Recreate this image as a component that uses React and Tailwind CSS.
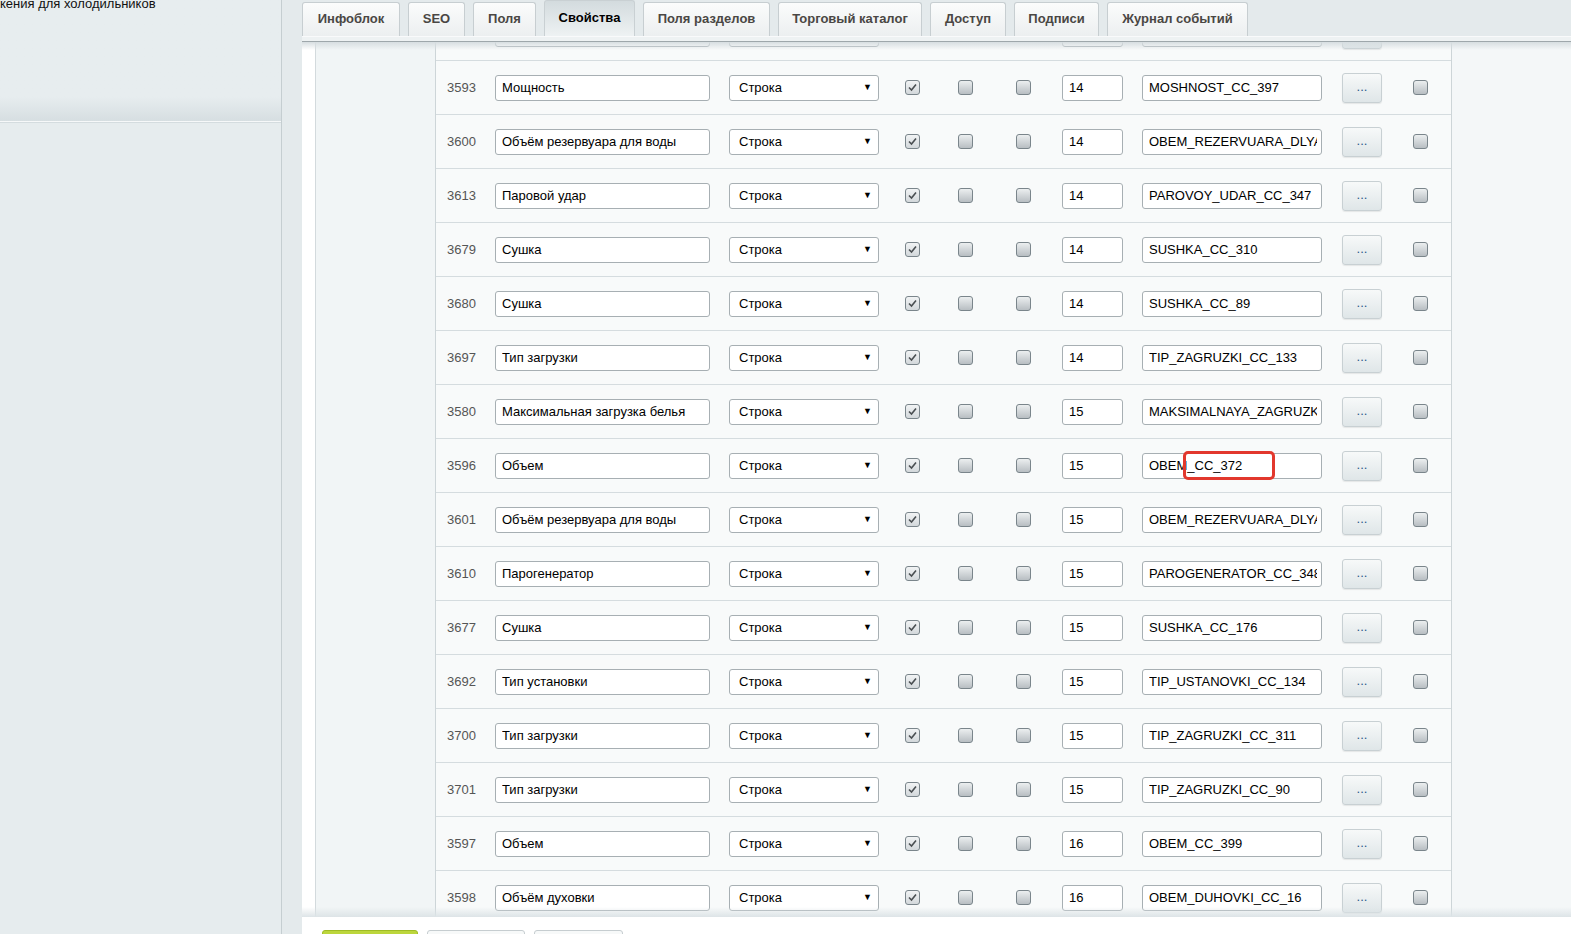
import React from "react";

const tabs = [
  { label: "Инфоблок", w: "w-[98px]" },
  { label: "SEO", w: "w-[57px]" },
  { label: "Поля", w: "w-[63px]" },
  { label: "Свойства", w: "w-[91px]", active: true },
  { label: "Поля разделов", w: "w-[127px]" },
  { label: "Торговый каталог", w: "w-[144px]" },
  { label: "Доступ", w: "w-[76px]" },
  { label: "Подписи", w: "w-[85px]" },
  { label: "Журнал событий", w: "w-[141px]" },
];

const rows = [
  { id: 3591, name: "Мощность двигателя", sort: 14, code: "MOSHNOST_DVIGATELYA_CC_112" },
  { id: 3593, name: "Мощность", sort: 14, code: "MOSHNOST_CC_397" },
  { id: 3600, name: "Объём резервуара для воды", sort: 14, code: "OBEM_REZERVUARA_DLYA_VODY_CC_356" },
  { id: 3613, name: "Паровой удар", sort: 14, code: "PAROVOY_UDAR_CC_347" },
  { id: 3679, name: "Сушка", sort: 14, code: "SUSHKA_CC_310" },
  { id: 3680, name: "Сушка", sort: 14, code: "SUSHKA_CC_89" },
  { id: 3697, name: "Тип загрузки", sort: 14, code: "TIP_ZAGRUZKI_CC_133" },
  { id: 3580, name: "Максимальная загрузка белья", sort: 15, code: "MAKSIMALNAYA_ZAGRUZKA_BELYA_CC_41" },
  { id: 3596, name: "Объем", sort: 15, code: "OBEM_CC_372", marked: true },
  { id: 3601, name: "Объём резервуара для воды", sort: 15, code: "OBEM_REZERVUARA_DLYA_VODY_CC_357" },
  { id: 3610, name: "Парогенератор", sort: 15, code: "PAROGENERATOR_CC_348" },
  { id: 3677, name: "Сушка", sort: 15, code: "SUSHKA_CC_176" },
  { id: 3692, name: "Тип установки", sort: 15, code: "TIP_USTANOVKI_CC_134" },
  { id: 3700, name: "Тип загрузки", sort: 15, code: "TIP_ZAGRUZKI_CC_311" },
  { id: 3701, name: "Тип загрузки", sort: 15, code: "TIP_ZAGRUZKI_CC_90" },
  { id: 3597, name: "Объем", sort: 16, code: "OBEM_CC_399" },
  { id: 3598, name: "Объём духовки", sort: 16, code: "OBEM_DUHOVKI_CC_16" },
];

const inputClass =
  "h-[26px] bg-white border border-[#a7afb3] rounded-[3px] pl-[6px] pr-[4px] text-[13px] text-black outline-none font-['Liberation_Sans',Arial,sans-serif]";

const Checkbox = ({ checked }) => (
  <div
    className={
      "w-[15px] h-[15px] shrink-0 rounded-[3px] border border-[#7a858b] flex items-center justify-center " +
      (checked
        ? "bg-gradient-to-b from-[#f1f3f4] to-[#d3d8db]"
        : "bg-gradient-to-b from-[#eceff0] to-[#b8bec2]")
    }
  >
    {checked && (
      <svg width="11" height="11" viewBox="0 0 11 11">
        <path d="M2 5.5 L4.5 8 L9 2.5" fill="none" stroke="#4a4f52" strokeWidth="1.6" />
      </svg>
    )}
  </div>
);

const PropertyRow = ({ row }) => (
  <div className="h-[54px] shrink-0 flex items-center border-b border-[#d5dcdf]">
    <div className="w-[59px] pl-[11px] text-[#555] text-[13px]">{row.id}</div>
    <input readOnly value={row.name} className={inputClass + " w-[215px]"} />
    <div className="ml-[19px] w-[150px] h-[26px] bg-white border border-[#a7afb3] rounded-[3px] pl-[9px] pr-[6px] flex items-center justify-between text-[13px] text-black">
      <span>Строка</span>
      <span className="text-[9px] leading-none">▼</span>
    </div>
    <div className="ml-[26px]">
      <Checkbox checked />
    </div>
    <div className="ml-[38px]">
      <Checkbox />
    </div>
    <div className="ml-[43px]">
      <Checkbox />
    </div>
    <input readOnly value={row.sort} className={inputClass + " ml-[31px] w-[61px]"} />
    <div className="relative ml-[19px]">
      <input readOnly value={row.code} className={inputClass + " w-[180px]"} />
      {row.marked && (
        <div className="absolute left-[41px] top-[-2px] w-[92px] h-[29px] border-[3px] border-[#e2382d] rounded-[5px]" />
      )}
    </div>
    <button className="ml-[20px] w-[40px] h-[30px] rounded-[3px] border border-[#c8d0d3] bg-gradient-to-b from-[#f7f9f9] to-[#dfe6e8] text-[#2f5a8a] text-[13px] leading-none pb-[3px] shadow-[0_1px_1px_rgba(0,0,0,0.08)]">
      ...
    </button>
    <div className="ml-[31px]">
      <Checkbox />
    </div>
  </div>
);

export default function App() {
  return (
    <div className="w-[1571px] h-[934px] overflow-hidden flex bg-[#e4eaec] font-['Liberation_Sans',Arial,sans-serif] text-[13px]">
      {/* left menu */}
      <aside className="w-[282px] shrink-0 flex flex-col border-r border-[#c5ced1] bg-[#e6ecee]">
        <div className="h-[122px] relative border-b border-[#f6f8f9] bg-gradient-to-b from-[#e7edef] from-80% to-[#d6dee1]">
          <div className="-mt-[4px] leading-[16px] text-[#111] whitespace-nowrap">кения для холодильников</div>
        </div>
        <div className="flex-1 border-t border-[#d4dcdf] bg-[#e6ecee]" />
      </aside>

      <div className="w-[20px] shrink-0" />

      <main className="flex-1 flex flex-col min-w-0">
        {/* tabs */}
        <div className="h-[36px] shrink-0 flex items-end gap-[8px]">
          {tabs.map((t) =>
            t.active ? (
              <div
                key={t.label}
                className={t.w + " h-[36px] rounded-t-[3px] border border-b-0 border-[#c9d0d3] bg-gradient-to-b from-[#d3dbde] to-[#eef2f3] flex items-center justify-center pb-[2px] font-bold text-black"}
              >
                {t.label}
              </div>
            ) : (
              <div
                key={t.label}
                className={t.w + " h-[34px] rounded-t-[3px] border border-b-0 border-[#c7ced1] bg-gradient-to-b from-[#fbfcfc] to-[#eceff0] flex items-center justify-center pb-[1px] font-bold text-[#4a4744]"}
              >
                {t.label}
              </div>
            )
          )}
        </div>
        <div className="h-[6px] shrink-0 bg-[#eef2f3] border-t border-[#f9fafb] border-b border-b-[#9ea7ab]" />

        {/* property list */}
        <div className="flex-1 min-h-0 relative flex overflow-hidden">
          <div className="w-[14px] shrink-0 bg-white border-r border-[#d3dadd]" />
          <div className="w-[120px] shrink-0 bg-[#f1f5f6] border-r border-[#cdd5d8]" />
          <div className="w-[1016px] shrink-0 bg-[#f8fafa] border-r border-[#cdd5d8] flex flex-col -mt-[35px]">
            {rows.map((r) => (
              <PropertyRow key={r.id} row={r} />
            ))}
          </div>
          <div className="flex-1 bg-[#f4f7f8]" />
          <div className="absolute left-0 right-0 top-0 h-[8px] bg-gradient-to-b from-[#d7dee1] to-transparent pointer-events-none" />
          <div className="absolute left-0 right-0 bottom-0 h-[10px] bg-gradient-to-b from-transparent to-[#dde4e7] pointer-events-none" />
        </div>

        {/* action bar */}
        <div className="h-[17px] shrink-0 bg-white flex items-start gap-[9px] pl-[20px] pt-[13px] overflow-hidden">
          <div className="w-[96px] h-[20px] shrink-0 rounded-[3px] border border-[#9fbc25] bg-[#bcd63c]" />
          <div className="w-[98px] h-[20px] shrink-0 rounded-[3px] border border-[#c6cdd0] bg-[#f7f9f9]" />
          <div className="w-[89px] h-[20px] shrink-0 rounded-[3px] border border-[#c6cdd0] bg-[#f7f9f9]" />
        </div>
      </main>
    </div>
  );
}
